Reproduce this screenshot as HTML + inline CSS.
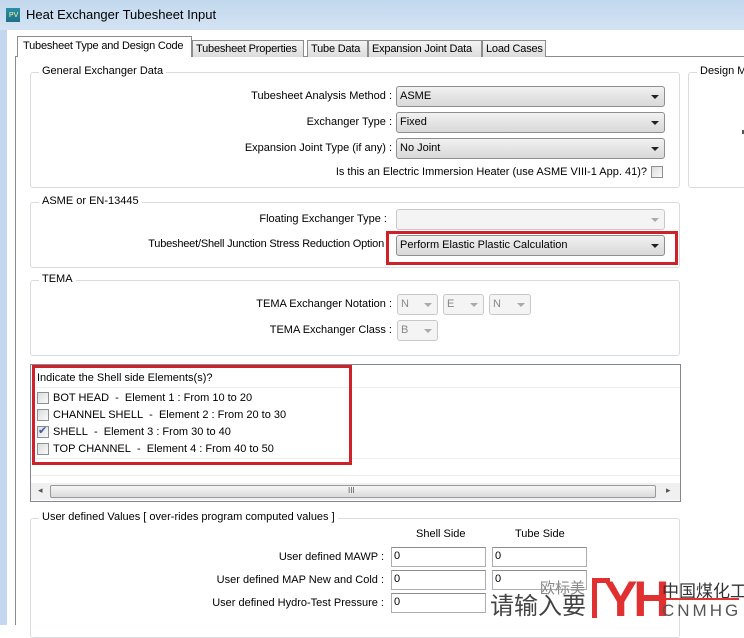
<!DOCTYPE html>
<html><head><meta charset="utf-8"><style>
*{box-sizing:border-box;margin:0;padding:0}
body{width:744px;height:625px;overflow:hidden;position:relative;background:#fff;font-family:"Liberation Sans","DejaVu Sans",sans-serif;font-size:11px;color:#000}
.a,.lb,.dd,.tab,.gl{white-space:nowrap}
.a{position:absolute}
.grp{position:absolute;border:1px solid #d8dce0;border-radius:3px}
.gl{position:absolute;background:#fff;padding:0 3px;font-size:11px;top:-8px;left:8px}
.dd{position:absolute;height:21px;border:1px solid #8e8f8f;border-radius:3px;background:linear-gradient(#f2f2f2,#e4e4e4 50%,#d9d9d9);padding:3px 3px;font-size:11px}
.dd:after{content:"";position:absolute;right:5px;top:8px;border-left:4px solid transparent;border-right:4px solid transparent;border-top:4px solid #222}
.dis{background:#f4f4f4;border-color:#c8c8c8;color:#888}
.dis:after{border-top-color:#aaa}
.lb{position:absolute;text-align:right;font-size:11px}
.cb{position:absolute;width:12px;height:12px;border:1px solid #8f8f8f;background:linear-gradient(135deg,#dcdcdc,#fafafa)}
.tab{position:absolute;top:40px;height:17px;border:1px solid #8c8c8c;border-bottom:none;background:linear-gradient(#f4f4f4,#dcdcdc);padding:2px 3px;font-size:11px;overflow:hidden;letter-spacing:-0.2px}
.in{position:absolute;height:20px;width:95px;border:1px solid #abadb3;border-top-color:#8c8c8c;padding:2px 2px;font-size:11px;background:#fff}
.red{position:absolute;border:3px solid #d0202a}
</style></head><body>
<div class="a" style="left:0;top:0;width:744px;height:30px;background:linear-gradient(#c3d8ee,#d3e3f3)"></div>
<div class="a" style="left:6px;top:8px;width:14px;height:14px;background:linear-gradient(#2a8fa8,#1f6f86)"><span style="position:absolute;left:3px;top:4px;font-size:7px;color:#ff9">PV</span></div>
<div class="a" style="left:26px;top:7px;font-size:13px">Heat Exchanger Tubesheet Input</div>
<div class="a" style="left:0;top:30px;width:7px;height:595px;background:#c3d8ee"></div>
<div class="a" style="left:7px;top:30px;width:737px;height:595px;background:#fff"></div>
<div class="a" style="left:15px;top:56px;width:729px;height:569px;border-left:1px solid #8c8c8c;border-top:1px solid #8c8c8c"></div>
<div class="tab" style="left:17px;top:36px;height:21px;width:175px;background:#fff;padding:3px 5px">Tubesheet Type and Design Code</div>
<div class="tab" style="left:192px;width:112px">Tubesheet Properties</div>
<div class="tab" style="left:307px;width:61px">Tube Data</div>
<div class="tab" style="left:368px;width:114px">Expansion Joint Data</div>
<div class="tab" style="left:482px;width:64px">Load Cases</div>

<div class="grp" style="left:30px;top:72px;width:650px;height:116px"><span class="gl">General Exchanger Data</span></div>
<div class="lb" style="left:100px;width:292px;top:90px">Tubesheet Analysis Method :</div>
<div class="dd" style="left:396px;top:86px;width:269px">ASME</div>
<div class="lb" style="left:100px;width:292px;top:116px">Exchanger Type :</div>
<div class="dd" style="left:396px;top:112px;width:269px">Fixed</div>
<div class="lb" style="left:100px;width:292px;top:142px">Expansion Joint Type (if any) :</div>
<div class="dd" style="left:396px;top:138px;width:269px">No Joint</div>
<div class="lb" style="left:200px;width:447px;top:166px">Is this an Electric Immersion Heater (use ASME VIII-1 App. 41)?</div>
<div class="cb" style="left:651px;top:166px"></div>
<div class="grp" style="left:688px;top:72px;width:70px;height:116px"><span class="gl">Design MDMT</span></div>
<div class="a" style="left:742px;top:130px;width:2px;height:4px;background:#555"></div>

<div class="grp" style="left:30px;top:202px;width:650px;height:66px"><span class="gl">ASME or EN-13445</span></div>
<div class="lb" style="left:100px;width:287px;top:213px">Floating Exchanger Type :</div>
<div class="dd dis" style="left:396px;top:209px;width:269px"></div>
<div class="lb" style="left:100px;width:284px;top:238px;letter-spacing:-0.2px">Tubesheet/Shell Junction Stress Reduction Option</div>
<div class="dd" style="left:396px;top:235px;width:269px">Perform Elastic Plastic Calculation</div>
<div class="red" style="left:386px;top:231px;width:292px;height:34px"></div>

<div class="grp" style="left:30px;top:280px;width:650px;height:76px"><span class="gl">TEMA</span></div>
<div class="lb" style="left:100px;width:292px;top:298px">TEMA Exchanger Notation :</div>
<div class="dd dis" style="left:397px;top:294px;width:41px">N</div>
<div class="dd dis" style="left:443px;top:294px;width:41px">E</div>
<div class="dd dis" style="left:489px;top:294px;width:42px">N</div>
<div class="lb" style="left:100px;width:292px;top:324px">TEMA Exchanger Class :</div>
<div class="dd dis" style="left:397px;top:320px;width:41px">B</div>

<div class="a" style="left:30px;top:364px;width:651px;height:138px;border:1px solid #828790"></div>
<div class="a" style="left:31px;top:387px;width:649px;height:1px;background:#eee"></div>
<div class="a" style="left:31px;top:458px;width:649px;height:1px;background:#eee"></div>
<div class="a" style="left:31px;top:475px;width:649px;height:1px;background:#eee"></div>
<div class="a" style="left:37px;top:372px">Indicate the Shell side Elements(s)?</div>
<div class="cb" style="left:37px;top:392px"></div><div class="a" style="left:53px;top:392px">BOT HEAD&nbsp; - &nbsp;Element 1 : From 10 to 20</div>
<div class="cb" style="left:37px;top:409px"></div><div class="a" style="left:53px;top:409px">CHANNEL SHELL&nbsp; - &nbsp;Element 2 : From 20 to 30</div>
<div class="cb" style="left:37px;top:426px"></div><div class="a" style="left:38px;top:424px;font-size:11px;color:#3a5a9c">✔</div><div class="a" style="left:53px;top:426px">SHELL&nbsp; - &nbsp;Element 3 : From 30 to 40</div>
<div class="cb" style="left:37px;top:443px"></div><div class="a" style="left:53px;top:443px">TOP CHANNEL&nbsp; - &nbsp;Element 4 : From 40 to 50</div>
<div class="red" style="left:32px;top:365px;width:320px;height:100px"></div>
<div class="a" style="left:31px;top:483px;width:649px;height:17px;background:#f0f0f0"></div>
<div class="a" style="left:38px;top:485px;font-size:9px;color:#555">◂</div>
<div class="a" style="left:50px;top:485px;width:606px;height:13px;border:1px solid #999;border-radius:2px;background:linear-gradient(#f6f6f6,#dadada)"></div>
<div class="a" style="left:348px;top:486px;font-size:8px;color:#555">III</div>
<div class="a" style="left:666px;top:485px;font-size:9px;color:#555">▸</div>

<div class="grp" style="left:30px;top:518px;width:650px;height:120px"><span class="gl">User defined Values [ over-rides program computed values ]</span></div>
<div class="a" style="left:416px;top:528px">Shell Side</div>
<div class="a" style="left:515px;top:528px">Tube Side</div>
<div class="lb" style="left:100px;width:284px;top:551px">User defined MAWP :</div>
<div class="lb" style="left:100px;width:284px;top:574px">User defined MAP New and Cold :</div>
<div class="lb" style="left:100px;width:284px;top:597px">User defined Hydro-Test Pressure :</div>
<div class="in" style="left:391px;top:547px">0</div><div class="in" style="left:492px;top:547px">0</div>
<div class="in" style="left:391px;top:570px">0</div><div class="in" style="left:492px;top:570px">0</div>
<div class="in" style="left:391px;top:593px">0</div>

<div class="a" style="left:490px;top:586px;font-size:24px;color:#444;font-family:'Noto Sans CJK SC',sans-serif">请输入要</div>
<div class="a" style="left:540px;top:577px;font-size:15px;color:#888;font-family:'Noto Sans CJK SC',sans-serif">欧标美</div>
<div class="a" style="left:592px;top:578px;width:5px;height:40px;background:#e03030"></div>
<div class="a" style="left:592px;top:578px;width:18px;height:5px;background:#e03030"></div>
<div class="a" style="left:604px;top:574px;font-size:50px;font-weight:bold;color:#e03030;letter-spacing:-4px;line-height:50px">YH</div>
<div class="a" style="left:662px;top:577px;font-size:17px;color:#333;font-family:'Noto Sans CJK SC',sans-serif">中国煤化工</div>
<div class="a" style="left:661px;top:598px;width:78px;height:2px;background:#e03030"></div>
<div class="a" style="left:662px;top:601px;font-size:17px;color:#555;letter-spacing:3px">CNMHG</div>
</body></html>
